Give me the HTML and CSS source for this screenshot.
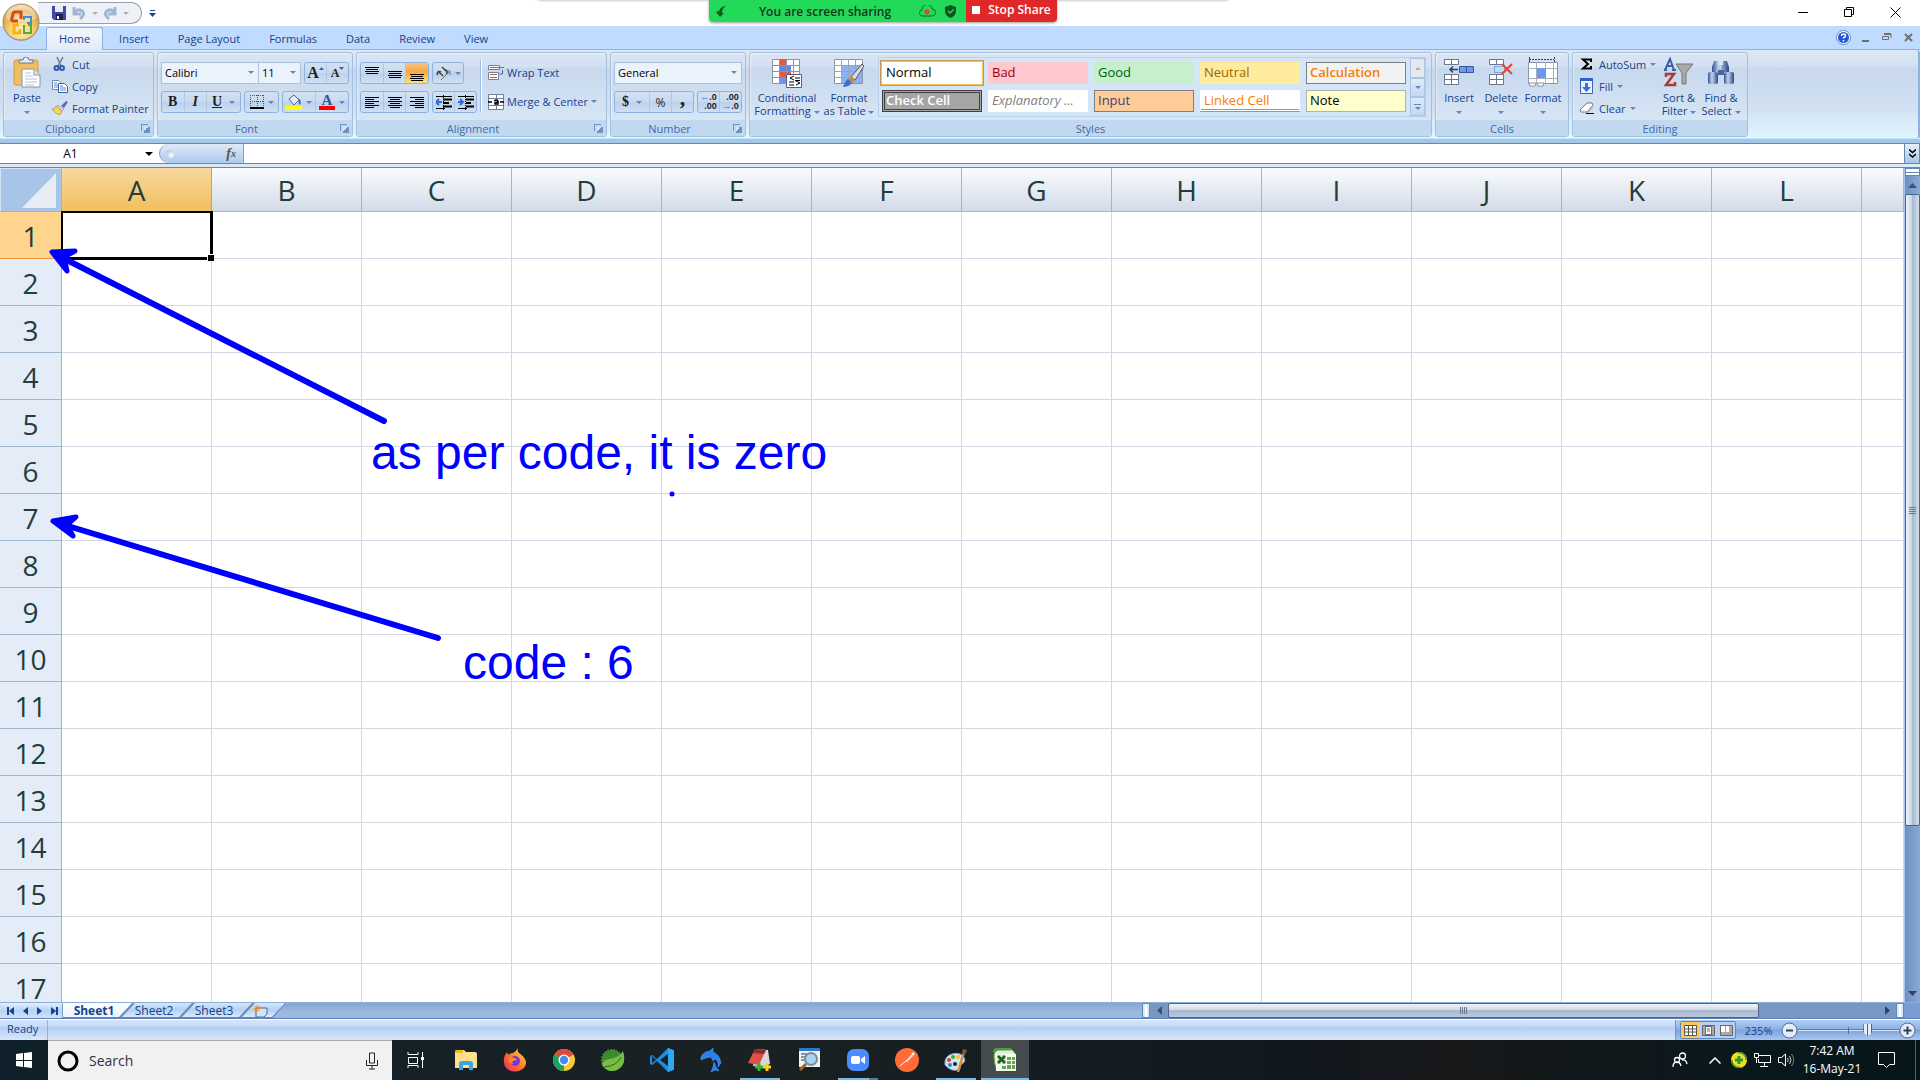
FILE: index.html
```html
<!DOCTYPE html>
<html lang="en">
<head>
<meta charset="utf-8">
<title>Microsoft Excel</title>
<link rel="stylesheet" href="styles.css">
</head>
<body>
<header class="titlebar">
  <button class="office" aria-label="Office Button">
    <svg width="38" height="38" viewBox="0 0 38 38">
      <defs>
        <radialGradient id="orb" cx=".5" cy=".75" r=".75"><stop offset="0" stop-color="#fff3c0"/><stop offset=".45" stop-color="#f3cf72"/><stop offset=".75" stop-color="#d9a548"/><stop offset="1" stop-color="#f7e6bd"/></radialGradient>
      </defs>
      <circle cx="19" cy="20" r="18" fill="#8a8f99" opacity=".5"/>
      <circle cx="19" cy="19" r="18" fill="url(#orb)" stroke="#a08a5c"/>
      <path d="M4 16a15 13 0 0 1 30 0q-15 5-30 0z" fill="#fff" opacity=".4"/>
      <g fill="none" stroke-width="3">
        <path d="M16 18h-5q-2 0-1-3l1-4q0-2 2-2h6v7" stroke="#dc4a12"/>
        <path d="M22 17v-3h7v6h-4" stroke="#3f8ed6" stroke-width="2"/>
        <path d="M17 22h-5v8h6v-4" stroke="#f5b21c"/>
        <path d="M22 22v8h7v-8h-3" stroke="#5da53c" stroke-width="2"/>
      </g>
    </svg>
  </button>
  <div class="qat">
    <button aria-label="Save"><svg width="14" height="14" viewBox="0 0 14 14"><path d="M0 0h14v14H2l-2-2z" fill="#4348a8"/><path d="M3 0h8v6H3z" fill="#e8ecfa"/><path d="M4 8h7v6H4z" fill="#1b1f55"/><path d="M5 10h2v3H5z" fill="#fff"/></svg></button>
    <button aria-label="Undo"><svg width="14" height="13" viewBox="0 0 14 13"><path d="M2 0v7h7M2 6q4-5 8-2t-2 8" fill="none" stroke="#a3b6d0" stroke-width="3"/></svg></button>
    <i class="caret gray"></i>
    <button aria-label="Redo"><svg width="14" height="13" viewBox="0 0 14 13"><path d="M12 0v7H5M12 6q-4-5-8-2t2 8" fill="none" stroke="#a3b6d0" stroke-width="3"/></svg></button>
    <i class="caret gray"></i>
  </div>
  <button class="customize" aria-label="Customize"><svg width="7" height="7" viewBox="0 0 7 7"><path d="M1 0h5v1H1zM0 3h7L3.500 7z" fill="#15428b"/></svg></button>
  <div class="winctl">
    <button aria-label="Minimize"><svg width="11" height="11"><path d="M0 5.500h10" stroke="#000"/></svg></button>
    <button aria-label="Restore"><svg width="11" height="11"><path d="M.5 2.500h7v7h-7zM2.500 2V.5h7v7H8" fill="none" stroke="#000"/></svg></button>
    <button aria-label="Close"><svg width="11" height="11"><path d="M.5.5l10 10M10.500.5l-10 10" stroke="#000"/></svg></button>
  </div>
</header>

<div class="share-panel"></div>
<div class="share">
  <div class="share-green">
    <svg class="bolt" width="11" height="11" viewBox="0 0 11 11"><path d="M10 0Q5 0 3 5L0 6l4 5 4-4H6q0-5 4-7z" fill="#0b5a1d"/></svg>
    <span>You are screen sharing</span>
    <svg width="17" height="12" viewBox="0 0 17 12"><path d="M4 11a3 3 0 0 1-1-6 5 5 0 0 1 10-1 3.500 3.500 0 0 1 0 7z" fill="none" stroke="#0e6b24"/><circle cx="8" cy="7" r="2.500" fill="#f03c3c"/></svg>
    <svg width="11" height="13" viewBox="0 0 11 13"><path d="M5.500 0L11 2v4q0 5-5.500 7Q0 11 0 6V2z" fill="#0d5520"/><path d="M3 6l2 2 3.500-3.500" fill="none" stroke="#23d959" stroke-width="1.500"/></svg>
  </div>
  <button class="share-stop"><svg width="8" height="8"><path d="M0 0h8v8H0z" fill="#fff"/></svg>Stop Share</button>
</div>

<nav class="tabs">
  <button class="active">Home</button><button>Insert</button><button>Page Layout</button><button>Formulas</button><button>Data</button><button>Review</button><button>View</button>
  <div class="docctl">
    <button aria-label="Help"><svg width="15" height="15" viewBox="0 0 15 15"><circle cx="7.500" cy="7.500" r="7" fill="#fff" stroke="#5d84c4"/><circle cx="7.500" cy="7.500" r="5.500" fill="#2358d8"/><path d="M5.500 6q0-2 2-2t2 1.700q0 1-1.200 1.500-.8.500-.8 1.300M7.500 10v1.500" fill="none" stroke="#fff" stroke-width="1.500"/></svg></button>
    <button aria-label="Minimize workbook"><svg width="9" height="11"><path d="M1 9h7" stroke="#70706c" stroke-width="2"/></svg></button>
    <button aria-label="Restore workbook"><svg width="10" height="9"><path d="M.5 3.500h6v3h-6zM2 1h7v4" fill="none" stroke="#70706c"/><path d="M2 1h7" stroke="#70706c" stroke-width="2"/></svg></button>
    <button aria-label="Close workbook"><svg width="9" height="9"><path d="M1 1l7 7M8 1L1 8" stroke="#70706c" stroke-width="2"/></svg></button>
  </div>
</nav>

<section class="ribbon">
  <div class="group g-clip">
    <div class="body">
      <button class="big w46"><svg width="28" height="32" viewBox="0 0 28 32"><rect x="1" y="3" width="24" height="25" rx="2" fill="#efbd62" stroke="#cf9a45"/><path d="M6 6V3h4q0-3 3-3t3 3h4v3z" fill="#e9edf2" stroke="#6d7684"/><path d="M9 12h12l6 6v12H9z" fill="#fff" stroke="#8593aa"/><path d="M21 12v6h6" fill="#dfe7f3" stroke="#8593aa"/><path d="M12 16h6M12 19h8M12 22h12M12 25h12M12 28h9" stroke="#b3c2da"/></svg><span>Paste<br><i class="caret"></i></span></button>
      <div class="stack">
        <button><svg width="16" height="16" viewBox="0 0 16 16"><path d="M5 1l4 9M11 1l-5 9" stroke="#6a7a95" stroke-width="1.500"/><circle cx="4.500" cy="12" r="2" fill="none" stroke="#2f5ab0" stroke-width="2"/><circle cx="10" cy="12" r="2" fill="none" stroke="#2f5ab0" stroke-width="2"/></svg>Cut</button>
        <button><svg width="16" height="16" viewBox="0 0 16 16"><path d="M.5 2.500h6l2 2v7h-8z" fill="#fff" stroke="#7186ad"/><path d="M2 5h3M2 7h4M2 9h4" stroke="#4f86e0"/><path d="M6.500 5.500h6l3 3v6h-9z" fill="#fff" stroke="#3f5f9c"/><path d="M8 8h3M8 10h6M8 12h6" stroke="#4f86e0"/></svg>Copy</button>
        <button><svg width="16" height="16" viewBox="0 0 16 16"><path d="M9 6l5-5 2 1-4 6z" fill="#5b6fae"/><path d="M6 5l6 4-2 2-6-4z" fill="#cfd3dc" stroke="#888" stroke-width=".5"/><path d="M4 6l6 5-2 4Q3 14 0 9q3 0 4-3z" fill="#f5d55c" stroke="#a97f2a" stroke-width=".6"/></svg>Format Painter</button>
      </div>
    </div>
    <div class="label has-launch">Clipboard<i class="launch"></i></div>
  </div>

  <div class="group g-font">
    <div class="body rows">
      <div class="row">
        <div class="combos">
          <label class="combo font-name"><select aria-label="Font"><option>Calibri</option></select><i class="caret"></i></label>
          <label class="combo font-size"><select aria-label="Font Size"><option>11</option></select><i class="caret"></i></label>
        </div>
        <div class="bg"><button aria-label="Grow Font" class="serif grow">A<svg width="5" height="12"><path d="M0 3h5L2.500 0z" fill="#3a62b0"/></svg></button><button aria-label="Shrink Font" class="serif small">A<svg width="5" height="12"><path d="M0 0h5L2.500 3z" fill="#3a62b0"/></svg></button></div>
      </div>
      <div class="row">
        <div class="bg w80"><button class="serif bold">B</button><button class="serif bold it">I</button><button class="serif bold wide"><u>U</u><i class="caret"></i></button></div>
        <div class="bg w35"><button aria-label="Borders"><svg width="14" height="14"><path d="M.5 0v12M7.500 0v12M13.500 0v12M0 .5h14M0 6.500h14" stroke="#555" stroke-dasharray="1 1"/><path d="M0 13h14" stroke="#000" stroke-width="2"/></svg><i class="caret"></i></button></div>
        <div class="bg w67"><button aria-label="Fill Color"><svg width="16" height="16"><path d="M3 5l5-4 5 5-5 5z" fill="#e8eef8" stroke="#4a6699"/><path d="M12 4q4 2 2 7-2-1-1-5z" fill="#2f62b5"/><path d="M0 12h16v4H0z" fill="#ffff00"/></svg><i class="caret"></i></button><button aria-label="Font Color" class="fcol"><b>A</b><i class="caret"></i></button></div>
      </div>
    </div>
    <div class="label has-launch">Font<i class="launch"></i></div>
  </div>

  <div class="group g-align">
    <div class="body">
      <div class="rows">
        <div class="row">
          <div class="bg w69"><button aria-label="Top Align"><svg width="14" height="15"><path d="M0 1.500h14M1 3.500h12M0 5.500h14M1 7.500h12" stroke="#000" /></svg></button><button aria-label="Middle Align"><svg width="14" height="15"><path d="M0 5.500h14M1 7.500h12M0 9.500h14M1 11.500h12" stroke="#000"/></svg></button><button aria-label="Bottom Align" class="on"><svg width="14" height="15"><path d="M0 8.500h14M1 10.500h12M0 12.500h14M1 14.500h12" stroke="#000"/></svg></button></div>
          <div class="bg w32"><button aria-label="Orientation"><svg width="15" height="15"><g fill="none" stroke="#444" stroke-width="1.500"><path d="M2 5l5 5M2 9a2 2 0 1 1 3-3M6 1l5 5M8 4a2 2 0 1 1 2 4"/><path d="M5 14l8-8M10 5l4 0 0 4" stroke="#6a7384" stroke-width="1"/></g></svg><i class="caret"></i></button></div>
        </div>
        <div class="row">
          <div class="bg w69"><button aria-label="Align Left"><svg width="14" height="13"><path d="M0 1.500h14M0 3.500h9M0 5.500h14M0 7.500h9M0 9.500h14M0 11.500h9" stroke="#000"/></svg></button><button aria-label="Center"><svg width="14" height="13"><path d="M0 1.500h14M2 3.500h10M0 5.500h14M2 7.500h10M0 9.500h14M2 11.500h10" stroke="#000"/></svg></button><button aria-label="Align Right"><svg width="14" height="13"><path d="M0 1.500h14M5 3.500h9M0 5.500h14M5 7.500h9M0 9.500h14M5 11.500h9" stroke="#000"/></svg></button></div>
          <div class="bg w45"><button aria-label="Decrease Indent"><svg width="16" height="15"><path d="M0 1.500h16M0 13.500h9" stroke="#000" stroke-dasharray="6 0"/><path d="M7 4.500h9M7 8h6M7 11.500h9" stroke="#000" stroke-width="2"/><path d="M7.500 0v15" stroke="#000" stroke-dasharray="1 1"/><path d="M6 7H1M3 4L0 7l3 3" stroke="#2f6ae0" stroke-width="2" fill="none"/></svg></button><button aria-label="Increase Indent"><svg width="16" height="15"><path d="M0 1.500h16M0 13.500h9" stroke="#000"/><path d="M8 4.500h8M8 8h5M8 11.500h8" stroke="#000" stroke-width="2"/><path d="M7.500 0v15" stroke="#000" stroke-dasharray="1 1"/><path d="M0 7h4M2 4l3 3-3 3" stroke="#2f6ae0" stroke-width="2" fill="none"/></svg></button></div>
        </div>
      </div>
      <div class="sep"></div>
      <div class="rows">
        <button class="wide-btn"><svg width="16" height="16"><path d="M.5.5h11v4H.5zM.5 7.500h10v7H.5z" fill="#fff" stroke="#6c7fa5"/><path d="M2 2.500h14M2 9.500h7M2 12.500h7" stroke="#a8682a"/><path d="M14.500 5v4h-3" fill="none" stroke="#4a5f8f"/></svg>Wrap Text</button>
        <button class="wide-btn"><svg width="16" height="16"><path d="M.5.5h15v15H.5z" fill="#fff" stroke="#6c7fa5"/><path d="M0 4.500h16M0 11.500h16M8.500 0v4M8.500 12v4" stroke="#6c7fa5"/><path d="M1 5h14v6H1z" fill="#fff"/><path d="M0 8h4M12 8h4M6 7q3-2 4 0v3H7q-1-2 3-2" fill="none" stroke="#000" stroke-width="1.500"/></svg>Merge &amp; Center<i class="caret"></i></button>
      </div>
    </div>
    <div class="label has-launch">Alignment<i class="launch"></i></div>
  </div>

  <div class="group g-num">
    <div class="body rows">
      <div class="row"><label class="combo numfmt"><select aria-label="Number Format"><option>General</option></select><i class="caret"></i></label></div>
      <div class="row">
        <div class="bg w80"><button class="serif bold wide">$<i class="caret"></i></button><button class="pct">%</button><button class="serif bold comma">,</button></div>
        <div class="bg w45 dec"><button><span><em>←</em>.0<br>.00</span></button><button><span>.00<br><em>→</em>.0</span></button></div>
      </div>
    </div>
    <div class="label has-launch">Number<i class="launch"></i></div>
  </div>

  <div class="group g-styles">
    <div class="body">
      <button class="big w66"><svg width="30" height="32" viewBox="0 0 30 32"><path d="M.5 2.500h27v24H.5z" fill="#fff" stroke="#8a94a8"/><path d="M7 2h7v24H7z" fill="#6a94ee"/><path d="M7 2h7v6H7zM7 14h12v6H7z" fill="#f0553c"/><path d="M7 8h12v6H7z" fill="#5c88e6"/><path d="M0 8.500h28M0 14.500h28M0 20.500h28M7.500 2v24M14.500 2v24M21.500 2v24" stroke="#8a94a8"/><path d="M14.500 17.500h15v13h-15z" fill="#fff" stroke="#55617c"/><path d="M22 19l-4 2 4 2M17 25h5M17 28h5M23 21h5M23 23.500h5M24 24l4 2-4 2" fill="none" stroke="#000"/></svg><span>Conditional<br>Formatting <i class="caret"></i></span></button>
      <button class="big w58"><svg width="30" height="32" viewBox="0 0 30 32"><path d="M.5 2.500h28v24H.5z" fill="#fff" stroke="#8a94a8"/><path d="M7 8h21v18H7z" fill="#8cb0f2"/><path d="M0 8.500h28M0 14.500h28M0 20.500h28M7.500 2v24M14.500 2v24M21.500 2v24" stroke="#9aa5bc"/><path d="M28 7l2 2-9 14-4-3z" fill="#d9dde5" stroke="#555"/><path d="M17 19l4 4-3 3-4-3z" fill="#c98b3a"/><path d="M14 22l4 4q-3 4-9 4 2-6 5-8z" fill="#3f6fc8"/></svg><span>Format<br>as Table <i class="caret"></i></span></button>
      <div class="gallery">
        <div class="cells">
          <button class="normal">Normal</button><button class="bad">Bad</button><button class="good">Good</button><button class="neutral">Neutral</button><button class="calc">Calculation</button>
          <button class="check">Check Cell</button><button class="expl">Explanatory ...</button><button class="inp">Input</button><button class="linked">Linked Cell</button><button class="note">Note</button>
        </div>
        <div class="gscroll"><button aria-label="Row up" class="off"><i class="caret up gray"></i></button><button aria-label="Row down"><i class="caret"></i></button><button aria-label="More styles" class="more"><i class="caret"></i></button></div>
      </div>
    </div>
    <div class="label">Styles</div>
  </div>

  <div class="group g-cells">
    <div class="body">
      <button class="big w42"><svg width="32" height="32" viewBox="0 0 32 32"><g fill="#fff" stroke="#6b7690"><path d="M1.500 2.500h14v5h-14zM1.500 17.500h14v10h-14z"/><path d="M8.500 2v5M8.500 17v10M1 22.500h14"/></g><path d="M16.500 9.500h14v6h-14z" fill="#6d98ee" stroke="#3a559b"/><path d="M23.500 9v6" stroke="#3a559b"/><path d="M7 12.500h8M10 9.500l-3 3 3 3" fill="none" stroke="#333f58" stroke-width="1.500"/></svg><span>Insert<br><i class="caret"></i></span></button>
      <button class="big w42"><svg width="32" height="32" viewBox="0 0 32 32"><g fill="#fff" stroke="#6b7690"><path d="M4.500 2.500h14v5h-14zM4.500 17.500h14v10h-14z"/><path d="M11.500 2v5M11.500 17v10M4 22.500h14"/></g><path d="M9.500 9.500h10v6h-10z" fill="none" stroke="#3366cc" stroke-dasharray="1 1"/><path d="M17 7l10 10M27 7L17 17" stroke="#e8432c" stroke-width="2"/></svg><span>Delete<br><i class="caret"></i></span></button>
      <button class="big w42"><svg width="32" height="32" viewBox="0 0 32 32"><path d="M2 2.500h25M2.500 0v5M27.500 0v5" stroke="#333f58" stroke-dasharray="2 1"/><path d="M1.500 5.500h29v21h-29z" fill="#fff" stroke="#8a94a8"/><path d="M1 11.500h29M1 21.500h29M9.500 5v21M18.500 5v21M26.500 5v21" stroke="#a5afc2"/><path d="M10 11h9v10h-9z" fill="#6d98ee"/><path d="M2 26h7l-1 3H3zM10 26h7l-1 3h-5z" fill="#fff" stroke="#8a94a8"/></svg><span>Format<br><i class="caret"></i></span></button>
    </div>
    <div class="label">Cells</div>
  </div>

  <div class="group g-edit">
    <div class="body">
      <div class="stack">
        <button><svg width="16" height="16"><path d="M12 6V3.500H4L9 8l-5 4.500h8V10" fill="none" stroke="#000" stroke-width="2"/></svg>AutoSum <i class="caret"></i></button>
        <button><svg width="16" height="16"><path d="M1.500.5h12v15h-12z" fill="#eaf1fc" stroke="#3a65b5"/><path d="M1 0h13v3H1z" fill="#2f62d0"/><path d="M6 5h3v4h3l-4.500 5L3 9h3z" fill="#3b6ee0"/></svg>Fill <i class="caret"></i></button>
        <button><svg width="16" height="16"><path d="M1 10L8 3h5l1 2-6 7H2z" fill="#fff" stroke="#6d7890"/><path d="M8 12l6-7v3l-5 5z" fill="#aab4c8"/><path d="M7 13.500h8" stroke="#000"/></svg>Clear <i class="caret"></i></button>
      </div>
      <button class="big w42"><svg width="32" height="32" viewBox="0 0 32 32"><path d="M13 7h17l-7 9v11h-4V16z" fill="#a9a9a9" stroke="#777"/><path d="M2 13L7 2l4 11M4 9h6M1 13h3M9 13h4" fill="none" stroke="#3a5fae" stroke-width="2"/><path d="M3 20v-3h8L3 28h9v-3" fill="none" stroke="#a93a34" stroke-width="2.500"/></svg><span>Sort &amp;<br>Filter <i class="caret"></i></span></button>
      <button class="big w42"><svg width="32" height="32" viewBox="0 0 32 32"><defs><linearGradient id="bino"><stop offset="0" stop-color="#34508c"/><stop offset=".4" stop-color="#c3d4f2"/><stop offset="1" stop-color="#2d4580"/></linearGradient></defs><path d="M9 4h4v4h2v7H7v-5zM18 4h4l2 6v5h-8V8h2z" fill="url(#bino)"/><rect x="3" y="15" width="10" height="12" rx="2" fill="url(#bino)"/><rect x="19" y="15" width="10" height="12" rx="2" fill="url(#bino)"/><path d="M13 13h6v5h-6z" fill="#4a659f"/></svg><span>Find &amp;<br>Select <i class="caret"></i></span></button>
    </div>
    <div class="label">Editing</div>
  </div>
</section>

<div class="formula">
  <label class="namebox"><input aria-label="Name Box" value="A1"><i class="caret black"></i></label>
  <div class="fx"><i class="knob"></i><button aria-label="Insert Function"><i>f</i><small>x</small></button></div>
  <input class="fbar" aria-label="Formula Bar">
  <button class="expand" aria-label="Expand Formula Bar"><svg width="7" height="9"><path d="M0 .5l3.500 3L7 .5M0 5l3.500 3L7 5" fill="none" stroke="#000" stroke-width="1.500"/></svg></button>
</div>

<main class="work">
  <div class="sheet">
    <table>
      <colgroup><col class="c-head"><col class="c"><col class="c"><col class="c"><col class="c"><col class="c"><col class="c"><col class="c"><col class="c"><col class="c"><col class="c"><col class="c"><col class="c"><col></colgroup>
      <thead><tr><th class="corner"><svg width="60" height="42" viewBox="0 0 60 42"><path d="M56 4v35H22z" fill="#e9edf3"/></svg></th><th class="sel">A</th><th>B</th><th>C</th><th>D</th><th>E</th><th>F</th><th>G</th><th>H</th><th>I</th><th>J</th><th>K</th><th>L</th><th></th></tr></thead>
      <tbody>
        <tr><th class="sel">1<td class="active-cell"><td><td><td><td><td><td><td><td><td><td><td><td></tr>
        <tr><th>2<td><td><td><td><td><td><td><td><td><td><td><td><td></tr>
        <tr><th>3<td><td><td><td><td><td><td><td><td><td><td><td><td></tr>
        <tr><th>4<td><td><td><td><td><td><td><td><td><td><td><td><td></tr>
        <tr><th>5<td><td><td><td><td><td><td><td><td><td><td><td><td></tr>
        <tr><th>6<td><td><td><td><td><td><td><td><td><td><td><td><td></tr>
        <tr><th>7<td><td><td><td><td><td><td><td><td><td><td><td><td></tr>
        <tr><th>8<td><td><td><td><td><td><td><td><td><td><td><td><td></tr>
        <tr><th>9<td><td><td><td><td><td><td><td><td><td><td><td><td></tr>
        <tr><th>10<td><td><td><td><td><td><td><td><td><td><td><td><td></tr>
        <tr><th>11<td><td><td><td><td><td><td><td><td><td><td><td><td></tr>
        <tr><th>12<td><td><td><td><td><td><td><td><td><td><td><td><td></tr>
        <tr><th>13<td><td><td><td><td><td><td><td><td><td><td><td><td></tr>
        <tr><th>14<td><td><td><td><td><td><td><td><td><td><td><td><td></tr>
        <tr><th>15<td><td><td><td><td><td><td><td><td><td><td><td><td></tr>
        <tr><th>16<td><td><td><td><td><td><td><td><td><td><td><td><td></tr>
        <tr><th>17<td><td><td><td><td><td><td><td><td><td><td><td><td></tr>
      </tbody>
    </table>
    <svg class="ink" width="900" height="500">
      <g fill="none" stroke="#0000ff" stroke-width="6" stroke-linecap="round" stroke-linejoin="round">
        <path d="M57 87L384 253"/><path d="M58 355L438 470"/>
      </g>
      <g fill="#0000ff" stroke="#0000ff" stroke-width="5" stroke-linejoin="round">
        <path d="M52 84L75 83L64 89L67 103z"/><path d="M53 353L76 349L67 357L73 368z"/>
      </g>
      <circle cx="672" cy="326" r="2.500" fill="#0000ff"/>
    </svg>
    <p class="remark r1">as per code, it is zero</p>
    <p class="remark r2">code : 6</p>
  </div>
  <div class="vscroll">
    <i class="vsplit"></i>
    <button aria-label="Scroll up"><svg width="9" height="5"><path d="M0 5h9L4.500 0z" fill="#43506e"/></svg></button>
    <div class="vtrack"><div class="vthumb"></div></div>
    <button aria-label="Scroll down"><svg width="9" height="5"><path d="M0 0h9L4.500 5z" fill="#33406a"/></svg></button>
  </div>
</main>

<div class="bottom">
  <div class="sheetnav">
    <button aria-label="First sheet"><svg width="7" height="8"><path d="M0 0h2v8H0zM7 0v8L2 4z" fill="#15428b"/></svg></button>
    <button aria-label="Previous sheet"><svg width="5" height="8"><path d="M5 0v8L0 4z" fill="#15428b"/></svg></button>
    <button aria-label="Next sheet"><svg width="5" height="8"><path d="M0 0v8l5-4z" fill="#15428b"/></svg></button>
    <button aria-label="Last sheet"><svg width="7" height="8"><path d="M5 0h2v8H5zM0 0v8l5-4z" fill="#15428b"/></svg></button>
  </div>
  <div class="sheettabs">
    <button class="current"><span>Sheet1</span></button><button><span>Sheet2</span></button><button><span>Sheet3</span></button><button class="new" aria-label="Insert Worksheet"><svg width="15" height="12" viewBox="0 0 15 12"><path d="M3 3h11v6l-3 3H3z" fill="#d8e4f5" stroke="#4d6595"/><path d="M4 0v7M.5 3.500h7M1.500 1l5 5M6.500 1l-5 5" stroke="#e88a20"/></svg></button>
  </div>
  <div class="hscroll">
    <i class="hsplit"></i>
    <button aria-label="Scroll left"><svg width="5" height="9"><path d="M5 0v9L0 4.500z" fill="#43506e"/></svg></button>
    <div class="htrack"><div class="hthumb"></div></div>
    <button aria-label="Scroll right"><svg width="5" height="9"><path d="M0 0v9l5-4.500z" fill="#33406a"/></svg></button>
    <i class="hsplit"></i>
  </div>
  <div class="sizer"></div>
</div>

<div class="status">
  <span class="ready">Ready</span>
  <div class="zoombar">
    <div class="views"><button class="on" aria-label="Normal view"><svg width="13" height="11"><path d="M.5.5h12v10H.5z" fill="#fff" stroke="#555"/><path d="M0 4h13M0 7h13M4.500 0v11M8.500 0v11" stroke="#555"/></svg></button><button aria-label="Page layout view"><svg width="13" height="11"><path d="M.5.5h12v10H.5z" fill="#aaa" stroke="#666"/><path d="M3.500 1.500h6v8h-6z" fill="#fff" stroke="#666"/><path d="M5 4h3M5 6h3" stroke="#666"/></svg></button><button aria-label="Page break view"><svg width="13" height="11"><path d="M.5.5h12v10H.5z" fill="#aaa" stroke="#666"/><path d="M1 1h4v6H1zM6 1h3v6H6z" fill="#fff"/></svg></button></div>
    <button class="pctlabel">235%</button>
    <button class="round" aria-label="Zoom out"><svg width="17" height="17"><circle cx="8.500" cy="8.500" r="7.500" fill="#e3ecf8" stroke="#4c6791"/><path d="M5 8.500h7" stroke="#333f55" stroke-width="2"/></svg></button>
    <input type="range" aria-label="Zoom" min="0" max="100" value="71">
    <button class="round" aria-label="Zoom in"><svg width="17" height="17"><circle cx="8.500" cy="8.500" r="7.500" fill="#e3ecf8" stroke="#4c6791"/><path d="M4.500 8.500h8M8.500 4.500v8" stroke="#333f55" stroke-width="2"/></svg></button>
  </div>
</div>

<footer class="taskbar">
  <button class="start" aria-label="Start"><svg width="16" height="16"><path d="M0 2l7-1v7H0zM8 1l8-1v8H8zM0 9h7v6l-7-1zM8 9h8v7l-8-1z" fill="#fff"/></svg></button>
  <label class="search"><svg width="22" height="22"><circle cx="11" cy="11" r="9" fill="none" stroke="#000" stroke-width="3"/></svg><input placeholder="Search" aria-label="Search"><svg width="12" height="18"><path d="M3.500 1h5v10h-5zM.5 8v5.500h11V8M6 14v3M3 17h6" fill="none" stroke="#222"/></svg></label>
  <div class="apps">
    <button aria-label="Task View"><svg width="18" height="16"><path d="M1 0v2.500h10V0M1.500 5.500h9v6h-9zM1 16v-2.500h10V16M15.500 0v16" fill="none" stroke="#fff"/><path d="M14 5h3v3h-3z" fill="#fff"/></svg></button>
    <button aria-label="File Explorer"><svg width="22" height="20"><path d="M0 2q0-2 2-2h7l2 2h9q2 0 2 2v14H0z" fill="#ffe08a"/><path d="M0 2q0-2 2-2h6v3H0z" fill="#f0b92c"/><path d="M4 20v-6q0-3 3-3h8q3 0 3 3v6h-4v-5H8v5z" fill="#35a9e6"/></svg></button>
    <button aria-label="Firefox"><svg width="24" height="24"><defs><linearGradient id="ff" x1="1" y1="0" x2="0" y2="1"><stop offset="0" stop-color="#ffe83d"/><stop offset=".5" stop-color="#ff7a28"/><stop offset="1" stop-color="#f0206a"/></linearGradient></defs><path d="M15 0q-1 3 1 5 7 5 7 10a11 9 0 0 1-22-1Q0 9 4 4l1 3q2-2 5-2 3-1 5-5z" fill="url(#ff)"/><circle cx="12" cy="13" r="5" fill="#7a36d8"/><path d="M6 9q6 0 8 3l-4 1q-2 2 1 3-5 0-6-3z" fill="#ff8a22"/></svg></button>
    <button aria-label="Chrome"><svg width="24" height="24"><circle cx="12" cy="12" r="11" fill="#fbc934"/><path d="M12 12L2.500 6.500A11 11 0 0 1 21.500 6.500z" fill="#dd4b3e"/><path d="M12 12l0 11A11 11 0 0 1 2.500 6.500z" fill="#1ca260"/><path d="M12 7h10a11 11 0 0 0-1-1H12z" fill="#dd4b3e"/><circle cx="12" cy="12" r="5.500" fill="#fff"/><circle cx="12" cy="12" r="4.200" fill="#4a8af4"/></svg></button>
    <button aria-label="Spring Tools"><svg width="24" height="24"><circle cx="11" cy="12" r="10" fill="#3d8b2e" stroke="#4c9232" stroke-width="2" stroke-dasharray="2 1"/><path d="M1 17Q2 12 8 11q10-1 14-8 3 10-1 15-4 5-10 5Q5 23 1 17z" fill="#77bd43"/><path d="M3 19q13-1 17-10" fill="none" stroke="#2c6c22"/></svg></button>
    <button aria-label="Visual Studio Code"><svg width="24" height="24"><path d="M18 0l6 2.500v19L18 24 7 13l-5 4-2-1V8l2-1 5 4z" fill="#1c8fe0"/><path d="M18 6v12l-8-6z" fill="#1a2024"/><path d="M18 0l6 2.500v19L18 24z" fill="#2caaf3"/><path d="M0 8l2-1 5 4-2 2zM5 12L0 16" fill="#0a6fb8"/><path d="M2 9l4 3-4 3z" fill="#1a2024"/></svg></button>
    <button aria-label="MySQL Workbench"><svg width="22" height="24"><path d="M1 9Q4 3 10 3l3-3v4q7 3 8 11l-3 4q1-6-3-8l-2 2-2-4-5 1-5 2zM14 14l2 5 3 4-4-1-4 2 2-5z" fill="#2a80f0" stroke="#5aa4ff" stroke-width=".5"/></svg></button>
    <button aria-label="Notes" class="running"><svg width="24" height="24"><path d="M8 1l12 1 2 14-9 3-8-1z" fill="#d8d8da"/><path d="M7 1l11 1-7 15-11-2z" fill="#e05048"/><path d="M7 1l11 1-2 4L5 5z" fill="#8e2a2a"/><path d="M11 15v8M7 19h8" stroke="#32b82e" stroke-width="3"/><path d="M19 15v8M15 19h8" stroke="#ffd21e" stroke-width="3"/></svg></button>
    <button aria-label="Log Viewer"><svg width="24" height="24"><path d="M2 1h21v18H2z" fill="#eef3f8"/><path d="M2 0h21v3H2z" fill="#2c78c8"/><path d="M4 6h7M4 9h5M4 12h5" stroke="#333"/><circle cx="14" cy="11" r="6" fill="#a9d3f0" stroke="#7f8c99" stroke-width="2"/><path d="M9 16l-6 6" stroke="#a0622c" stroke-width="3"/></svg></button>
    <button aria-label="Zoom" class="running more"><svg width="24" height="24"><rect x="1" y="1" width="22" height="22" rx="7" fill="#4a8cff"/><rect x="5" y="8" width="9" height="8" rx="2" fill="#fff"/><path d="M15 11l4-3v8l-4-3z" fill="#fff"/></svg></button>
    <button aria-label="Postman"><svg width="24" height="24"><circle cx="12" cy="12" r="12" fill="#ff6c37"/><path d="M5 18l7-6 5-5" fill="none" stroke="#fff"/><path d="M10 14l6-7 2 1-6 6z" fill="#ffd9c9"/><circle cx="18" cy="6" r="1.500" fill="#fff"/></svg></button>
    <button aria-label="Paint" class="running"><svg width="24" height="24"><path d="M1 17Q0 8 8 6q7-2 11 2 4 5-1 8-3 1-2 5-8 4-15-4z" fill="#cfe7f5" stroke="#7aa7c7"/><circle cx="5" cy="12" r="2" fill="#e03a30"/><circle cx="9" cy="9" r="2" fill="#46a83c"/><circle cx="14" cy="9" r="2" fill="#f5c127"/><circle cx="6" cy="17" r="2" fill="#3d7fd8"/><circle cx="11" cy="16" r="2" fill="#222"/><path d="M20 4l-6 20" stroke="#d98a35" stroke-width="2.500"/><path d="M19 1l4 1-2 5-3-1z" fill="#7a5a3a"/></svg></button>
    <button aria-label="Excel" class="focused"><svg width="24" height="24"><path d="M4 1h14l4 4v17H4q-3-6-3-14 0-5 3-7z" fill="#dff0d8" stroke="#6aa84f"/><path d="M1 4q1-3 5-3h12" fill="none" stroke="#4f9a3d" stroke-width="3"/><path d="M3 6h20v17H3z" fill="#f5faf2"/><path d="M14 9h4v3h-4zM19 9h3v3h-3zM14 13h4v3h-4zM19 13h3v3h-3zM9 18h4v3H9zM14 17h4v4h-4zM19 17h3v4h-3z" fill="#62a84e"/><path d="M4 7h9v9H4z" fill="#cfe6c6"/><path d="M5 8l7 7M12 8l-7 7" stroke="#1f5c1c" stroke-width="2.500"/></svg></button>
  </div>
  <div class="tray">
    <button aria-label="People"><svg width="16" height="16"><g fill="none" stroke="#fff" stroke-width="1.300"><circle cx="10.500" cy="4" r="3"/><circle cx="5" cy="8" r="2.500"/><path d="M1 15q0-5 4-5 3 0 4 4M10 8q4-1 5 4"/></g></svg></button>
    <button class="chev" aria-label="Show hidden icons"><svg width="12" height="7"><path d="M.5 6.500L6 1l5.500 5.500" fill="none" stroke="#fff" stroke-width="1.500"/></svg></button>
    <button aria-label="Antivirus"><svg width="16" height="16"><circle cx="8" cy="8" r="8" fill="#f5dc1e"/><path d="M7 .7A7.300 7.300 0 0 1 15.300 8M9 15.300A7.300 7.300 0 0 1 .7 8" fill="none" stroke="#2e9a33" stroke-width="1.500"/><path d="M8 4v8M4 8h8" stroke="#2e9a33" stroke-width="3"/></svg></button>
    <button aria-label="Network"><svg width="17" height="14"><path d="M4 2.500h12.500v7H4.500V6M10.500 10v3M6 13.500h8M.5.500h4v4h-4zM2.500 5v5" fill="none" stroke="#fff"/></svg></button>
    <button aria-label="Volume"><svg width="17" height="14"><path d="M.5 4.500h3l4-3.500v12l-4-3.500h-3z" fill="none" stroke="#fff"/><path d="M9.500 5q1.500 2 0 4M11.500 3q3 4 0 8" fill="none" stroke="#ccc"/><path d="M13.500 1q4.500 6 0 12" fill="none" stroke="#777"/></svg></button>
    <div class="clock">7:42 AM<br>16-May-21</div>
    <button class="notif" aria-label="Notifications"><svg width="17" height="17"><path d="M.5.5h16v12h-5l-3 3-3-3h-5z" fill="none" stroke="#fff"/></svg></button>
    <i class="peek"></i>
  </div>
</footer>
</body>
</html>
```
FILE: styles.css
```css
* { box-sizing: border-box; }
html, body { height: 100%; }
body {
  margin: 0;
  display: flex;
  flex-direction: column;
  overflow: hidden;
  position: relative;
  background: #fff;
  font: 11px/13px "Open Sans", "Noto Sans", sans-serif;
  color: #15428b;
}
button, input, select {
  font: inherit;
  color: inherit;
  margin: 0;
  padding: 0;
  border: 0;
  background: none;
  outline: 0;
}
button { display: flex; align-items: center; justify-content: center; white-space: nowrap; }
svg { display: block; flex: none; }

.caret {
  display: inline-block;
  flex: none;
  width: 0;
  height: 0;
  border: 3px solid transparent;
  border-top-color: #5b87c5;
  border-bottom: 0;
  vertical-align: middle;
}
.caret.gray { border-top-color: #a9b0ba; }
.caret.up { border-top: 0; border-bottom: 3px solid #a9b0ba; }
.caret.black { border-width: 4px 4px 0; border-top-color: #000; }

/* Title bar */
.titlebar { flex: none; height: 26px; display: flex; align-items: center; background: #fff; }
.office { position: absolute; left: 2px; top: 3px; z-index: 3; }
.qat {
  margin-left: 38px;
  width: 104px;
  height: 22px;
  padding: 0 12px 0 14px;
  display: flex;
  align-items: center;
  justify-content: space-between;
  border: 1px solid #9aa1ab;
  border-left: 0;
  border-radius: 0 11px 11px 0;
  background: #eef2f8;
}
.customize { margin-left: 7px; }
.winctl { margin-left: auto; margin-right: 19px; padding-bottom: 2px; display: flex; gap: 35px; height: 26px; align-items: center; }

/* Screen sharing overlay */
.share-panel { position: absolute; left: 28%; right: 36%; top: -4px; height: 4px; border-radius: 4px; box-shadow: 0 0 3px #999; z-index: 4; }
.share { position: absolute; top: 0; left: 709px; z-index: 5; display: flex; font-size: 12px; box-shadow: 0 1px 3px #999; border-radius: 0 0 4px 4px; }
.share-green { width: 257px; height: 22px; padding: 0 10px 0 7px; display: flex; align-items: center; background: #23d959; color: #17341f; font-weight: 600; border-radius: 0 0 0 4px; white-space: nowrap; gap: 9px; }
.share-green .bolt { margin-right: 23px; }
.share-green span { margin-right: auto; }
.share-stop { width: 91px; height: 22px; gap: 8px; padding-bottom: 3px; background: #e02828; color: #fff; font-weight: 600; font-size: 12px; border-radius: 0 0 4px 0; }

/* Ribbon tabs */
.tabs { flex: none; height: 24px; padding-left: 46px; display: flex; gap: 3px; background: #bfdbff; border-bottom: 1px solid #8db2e3; }
.tabs > button { padding: 1px 13px 0; }
.tabs > .active { height: 23px; margin-top: 1px; padding: 0 12px 1px; background: linear-gradient(#f2f7fd, #e2ebf7); border: 1px solid #8db2e3; border-bottom: 0; border-radius: 3px 3px 0 0; }
.docctl { margin-left: auto; padding: 0 7px 1px 0; display: flex; align-items: center; gap: 12px; }
.docctl button:first-child { margin-right: -2px; }

/* Ribbon */
.ribbon {
  flex: none;
  height: 89px;
  padding: 2px 3px 2px;
  display: flex;
  gap: 3px;
  background: linear-gradient(#dde8f5 0, #d3e0f0 17px, #c8d8ed 18px, #d2e2f3 60px, #e3f5ff 100%);
  border-right: 2px solid #8db2e3;
  border-bottom: 1px solid #b5eef5;
  border-radius: 0 3px 3px 0;
}
.group {
  flex: none;
  height: 85px;
  display: grid;
  grid-template-rows: 1fr 16px;
  border: 1px solid #a4bfdf;
  border-radius: 3px;
  background: linear-gradient(#dce6f3 0, #d3e0f0 14px, #c8d8ed 15px, #d6e6f5 68px);
  box-shadow: inset 1px 1px 0 rgba(255, 255, 255, .45);
}
.g-clip { width: 151px; }
.g-font { width: 196px; }
.g-align { width: 251px; }
.g-num { width: 136px; }
.g-styles { width: 683px; }
.g-cells { width: 134px; }
.g-edit { width: 176px; }
.body { display: flex; }
.label { position: relative; padding-top: 1px; line-height: 15px; text-align: center; background: #c2d8f0; color: #3e6aaa; }
.has-launch { padding-right: 17px; }
.launch { position: absolute; right: 5px; top: 4px; width: 7px; height: 7px; border: 1px solid #6f94c3; border-right: 0; border-bottom: 0; }
.launch::after { content: ""; position: absolute; left: 2px; top: 2px; width: 5px; height: 5px; background: linear-gradient(135deg, #dbe8f7 40%, #6f94c3 40%); border-right: 1px solid #6f94c3; border-bottom: 1px solid #6f94c3; }

.big { flex-direction: column; justify-content: flex-start; padding-top: 4px; gap: 2px; text-align: center; }
.w46 { width: 46px; }
.w66 { width: 66px; }
.w58 { width: 58px; }
.w42 { width: 42px; }
.stack { display: grid; grid-template-rows: repeat(3, 22px); padding: 0 0 0 2px; }
.stack button { justify-content: flex-start; gap: 4px; }
.g-edit .stack { width: 85px; padding-left: 6px; }
.g-cells .body { padding-left: 2px; }
.g-styles .body { padding-left: 4px; }

.rows { display: flex; flex-direction: column; gap: 7px; padding: 9px 0 0 3px; }
.row { display: flex; gap: 3px; height: 22px; }
.combos { display: flex; }
.combo { position: relative; display: flex; height: 22px; border: 1px solid #abc1de; background: #eaf2fb; color: #000; }
.combo select { appearance: none; width: 100%; padding: 0 0 2px 3px; }
.combo .caret { position: absolute; right: 4px; top: 8px; pointer-events: none; }
.font-name { width: 98px; }
.font-size { width: 43px; margin-left: -1px; }
.numfmt { width: 128px; }
.bg { flex: none; display: flex; height: 22px; border: 1px solid #8fb1dd; border-radius: 3px; background: linear-gradient(#d3e1f2 0, #c9daef 48%, #bdd1ec 52%, #cfe0f5); overflow: hidden; color: #1e1e1e; }
.bg button { flex: 1 1 0; gap: 4px; }
.bg button + button { border-left: 1px solid #b0c8e6; }
.bg .wide { flex: 0 0 34px; gap: 7px; }
.bg .on { background: linear-gradient(#f5c28c, #fba83a 45%, #fde27c); }
.g-font .row:first-child .bg { width: 45px; }
.w80 { width: 80px; }
.w35 { width: 35px; }
.w67 { width: 67px; }
.w69 { width: 69px; }
.w32 { width: 32px; }
.w45 { width: 45px; }
.serif { font: bold 14px/16px "Liberation Serif", serif; }
.serif.grow { font-size: 16px; }
.bg button.serif svg { margin-left: -4px; }
.serif.small { font-size: 12px; }
.it { font-style: italic; }
.pct { font-size: 12px; }
.bg .comma { font-size: 22px; padding-bottom: 9px; }
.fcol b { font: bold 15px/13px "Liberation Serif", serif; width: 16px; height: 16px; border-bottom: 4px solid #f00; color: #2f5597; }
.dec button { font: bold 9px/9px "Liberation Sans", sans-serif; text-align: right; }
.dec em { font-style: normal; color: #2f6ae0; }
.sep { width: 1px; margin: 6px 4px 8px 3px; background: #9bbbdf; box-shadow: 1px 0 0 #fff; }
.wide-btn { height: 22px; padding-bottom: 1px; justify-content: flex-start; gap: 3px; }

/* Cell style gallery */
.gallery { margin-top: 4px; width: 548px; height: 60px; display: flex; border: 1px solid #b9d0ed; background: #d4e5f7; }
.cells { display: grid; grid-template: repeat(2, 22px) / repeat(5, 100px); gap: 6px; padding: 4px 4px 0 3px; font-size: 13px; }
.cells button { justify-content: flex-start; padding: 0 0 2px 3px; border: 1px solid transparent; }
.normal { background: #fff; color: #000; box-shadow: 0 0 0 1px #f6c35b, 0 0 0 2px #c29a52; }
.bad { background: #ffc7ce; color: #9c0006; }
.good { background: #c6efce; color: #006100; }
.neutral { background: #ffeb9c; color: #9c6500; }
.cells .calc { background: #f2f2f2; color: #fa7d00; border-color: #7f7f7f; font-weight: 600; }
.cells .check { background: #a5a5a5; color: #fff; border: 3px double #3f3f3f; padding-left: 1px; font-weight: 600; }
.expl { background: #fff; color: #7f7f7f; font-style: italic; }
.cells .inp { background: #ffcc99; color: #3f3f76; border-color: #7f7f7f; }
.cells .linked { background: #fff; color: #fa7d00; border-bottom: 3px double #ff8001; padding-bottom: 0; }
.cells .note { background: #ffffcc; color: #000; border-color: #b2b2b2; }
.gscroll { flex: 1; display: grid; grid-template-rows: 20px 19px 19px; }
.gscroll button { border: 1px solid #a9c4e6; background: linear-gradient(#dfeaf8, #c3d8f2); }
.gscroll .off { background: #e6e8ec; }
.gscroll .more { flex-direction: column; gap: 2px; }
.gscroll .more::before { content: ""; width: 7px; height: 1px; background: #5b87c5; }

/* Formula bar */
.formula { flex: none; height: 29px; display: flex; border-top: 4px solid #a8c4e8; border-bottom: 4px solid #dbe8f7; box-shadow: inset 0 1px 0 #6089b4, inset 0 -1px 0 #6089b4; color: #000; position: relative; z-index: 1; }
.formula::after { content: ""; position: absolute; left: 0; right: 0; bottom: -4px; height: 1px; background: #6089b4; }
.namebox { width: 159px; padding: 1px 6px 1px 0; display: flex; align-items: center; font-size: 12px; }
.namebox input { width: 141px; text-align: center; margin-right: auto; }
.fx { width: 85px; margin: 1px 0; display: flex; align-items: center; justify-content: space-between; padding: 0 7px 0 6px; border: 1px solid #7e9fca; border-width: 0 1px 0 1px; border-radius: 10px 0 0 10px; background: linear-gradient(#dfeaf8, #b2cdef 90%); }
.knob { width: 8px; height: 8px; border-radius: 4px; background: radial-gradient(circle at 70% 70%, #fff, #a9b6c8); }
.fx button { font: bold 14px/14px "Liberation Serif", serif; color: #555; }
.fx small { font-size: 10px; align-self: flex-end; font-style: italic; }
.fbar { flex: 1; margin: 1px 0; background: #fff; }
.expand { width: 16px; margin: 1px 0; border-left: 1px solid #6089b4; border-right: 1px solid #6089b4; background: linear-gradient(#e6effa, #a9c4e8); }

/* Worksheet */
.work { flex: 1; min-height: 0; display: flex; }
.sheet { flex: 1; min-width: 0; position: relative; overflow: hidden; background: #fff; }
table { width: 100%; table-layout: fixed; border-collapse: separate; border-spacing: 0; }
.c-head { width: 62px; }
.c { width: 150px; }
th, td { padding: 0; border: 1px solid #d0d7e5; border-width: 0 1px 1px 0; }
th { font-size: 28px; line-height: 28px; font-weight: 400; color: #233c3c; }
thead th { height: 44px; border-color: #9eb6ce; background: linear-gradient(#f9fcfd, #d3dbe9); }
tbody th { height: 47px; padding-top: 1px; background: #e4ecf7; border-color: #9eb6ce; }
thead .sel { background: linear-gradient(#f8d8a0, #f0c05c); border-color: #f29536; }
tbody .sel { background: #ffd58d; border-color: #f29536; }
thead .corner { background: #a9c4e9; box-shadow: inset 1px 1px 0 #d5e4f2; }
td { height: 47px; }
.active-cell { position: relative; }
.active-cell::before { content: ""; position: absolute; inset: -1px -2px -2px -1px; border: 3px solid #000; border-top-width: 2px; border-left-width: 2px; }
.active-cell::after { content: ""; position: absolute; right: -3px; bottom: -3px; width: 6px; height: 6px; background: #000; border: 1px solid #fff; border-width: 1px 0 0 1px; }
.ink { position: absolute; left: 0; top: 0; }
.remark { position: absolute; margin: 0; font: 48px/54px "Liberation Sans", Arial, sans-serif; color: #0000ff; white-space: nowrap; }
.r1 { left: 371px; top: 258px; }
.r2 { left: 463px; top: 468px; }

/* Scroll bars */
.vscroll { flex: none; width: 16px; display: flex; flex-direction: column; background: linear-gradient(90deg, #6d90c0, #8aaad4); border-left: 1px solid #a5c5ee; }
.vsplit { height: 8px; border: 1px solid #6089b4; background: linear-gradient(#fff 3px, #6089b4 3px 4px, #fff 4px); }
.vscroll button { height: 18px; }
.vtrack { flex: 1; min-height: 0; }
.vthumb { height: 80%; border: 1px solid #4a6690; border-radius: 2px; background: repeating-linear-gradient(#68788f 0 1px, transparent 1px 2px) center / 7px 7px no-repeat, linear-gradient(90deg, #f0f4f8, #c8d3e0 45%, #a9b9cf 50%, #d5deea); }
.bottom { flex: none; height: 17px; display: flex; background: linear-gradient(#84a4d2, #9eb9e0 60%); border-top: 1px solid #8caedb; border-bottom: 1px solid #5a80b8; }
.sheetnav { width: 63px; padding-left: 2px; display: flex; align-items: center; justify-content: space-around; border-right: 1px solid #7f9fc9; background: linear-gradient(#e3eefb, #b8d2f3 50%, #cfe1f8); }
.sheettabs { display: flex; font-size: 12px; }
.sheettabs button { position: relative; width: 73px; height: 15px; margin-left: -13px; padding-right: 5px; background: #6588bb; clip-path: polygon(13px 0, 100% 0, calc(100% - 13px) 100%, 0 100%); }
.sheettabs button::before { content: ""; position: absolute; inset: 0 1px 1px 2px; background: linear-gradient(#d8e6f8, #b5d0f4 50%, #dce9fa); clip-path: polygon(13px 0, 100% 0, calc(100% - 13px) 100%, 0 100%); }
.sheettabs span, .sheettabs svg { position: relative; }
.sheettabs .current { width: 70px; margin-left: 0; padding-right: 10px; padding-left: 2px; clip-path: polygon(0 0, 100% 0, calc(100% - 13px) 100%, 0 100%); font-weight: 700; }
.sheettabs .current::before { left: 0; background: linear-gradient(#fff, #eaf3ff); clip-path: polygon(0 0, 100% 0, calc(100% - 13px) 100%, 0 100%); }
.sheettabs .new { width: 46px; padding: 0 6px 0 0; }
.hscroll { margin-left: auto; width: 762px; display: flex; background: #7897c2; }
.hsplit { width: 8px; border: 1px solid #6089b4; background: #fff; box-shadow: inset -2px 0 0 #dbe8f7, inset 2px 0 0 #dbe8f7; }
.hscroll button { width: 18px; }
.htrack { flex: 1; }
.hthumb { width: 83.3%; height: 15px; border: 1px solid #4a6690; border-radius: 2px; background: repeating-linear-gradient(90deg, #68788f 0 1px, transparent 1px 2px) center / 7px 7px no-repeat, linear-gradient(#f0f4f8, #d0d9e3 45%, #a9b9cf 50%, #b9c7d9); }
.sizer { width: 16px; background: #7a9cd3; }

/* Status bar */
.status { flex: none; height: 21px; display: flex; border-top: 1px solid #fff; background: linear-gradient(#d6e4f8 0, #c9dcf8 6px, #b3cff4 7px, #d9e6f8); }
.ready { width: 48px; padding-left: 7px; line-height: 17px; border-right: 1px solid #8db2e3; }
.zoombar { margin-left: auto; width: 245px; padding-left: 4px; display: flex; align-items: center; border-left: 1px solid #6f95cb; background: linear-gradient(#b3cdf2, #8db2e8 45%, #7da3dc 50%, #a8c6f0); }
.views { display: flex; height: 18px; border: 1px solid #5f88bf; border-radius: 2px; background: #b8d1f2; }
.views button { width: 18px; }
.views .on { background: #fbc65e; }
.pctlabel { width: 45px; font-size: 11px; }
.round { width: 17px; }
.zoombar input { appearance: none; width: 101px; height: 17px; background: linear-gradient(#4f74ab, #4f74ab) center / 1px 7px no-repeat, linear-gradient(#567cb5 1px, #d5e4f8 1px) center / 100% 2px no-repeat; }
.zoombar input::-webkit-slider-thumb { appearance: none; width: 9px; height: 13px; background: linear-gradient(90deg, #48628f 1px, #e6eefa 1px 4px, #48628f 4px 5px, #e6eefa 5px 8px, #48628f 8px); clip-path: polygon(0 0, 100% 0, 100% 65%, 50% 100%, 0 65%); }

/* Taskbar */
.taskbar { flex: none; height: 40px; display: flex; background: linear-gradient(90deg, #10202a, #1a2123 40%, #111820 66%, #17181a 76%, #09181d 92%, #06151a); color: #fff; }
.start { width: 48px; }
.search { width: 344px; padding: 0 14px 0 9px; display: flex; align-items: center; gap: 10px; background: #f1f1f1; border-top: 1px solid #aaa; }
.search input { flex: 1; min-width: 0; font-size: 14px; line-height: 20px; color: #333; }
.search input::placeholder { color: #333; opacity: 1; }
.apps { display: flex; gap: 1px; padding-left: 1px; }
.apps button { width: 48px; height: 40px; position: relative; }
.apps button:first-child svg { margin-right: 2px; }
.apps .running::after { content: ""; position: absolute; left: 4px; right: 4px; bottom: 0; height: 2px; background: #76b9ed; }
.apps .more::after { background: linear-gradient(90deg, #76b9ed 31px, #4f7ea3 31px); }
.apps .focused { background: #464b4e; border-bottom: 2px solid #76b9ed; padding-top: 2px; }
.tray { margin-left: auto; display: flex; align-items: center; gap: 7px; }
.chev { margin: 0 3px 0 14px; }
.clock { width: 60px; text-align: center; font-size: 12px; line-height: 18px; }
.notif { margin: 0 13px 0 9px; width: 17px; }
.peek { width: 5px; height: 40px; border-left: 1px solid #555f63; }
```
